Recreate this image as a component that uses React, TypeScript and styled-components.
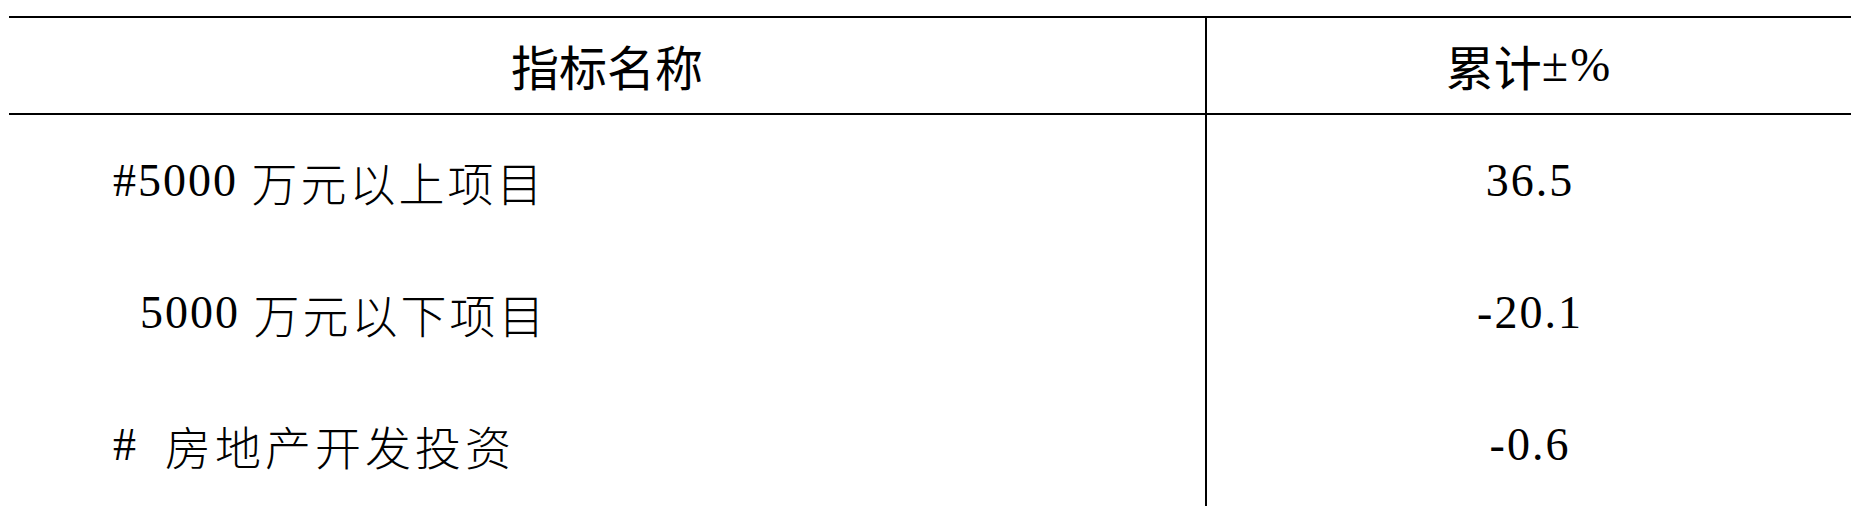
import React from "react";
import styled, { createGlobalStyle } from "styled-components";

type Row = {
  lead: string;
  name: string;
  value: string;
  spacing: number;
};

const rows: Row[] = [
  { lead: "#5000 ", name: "万元以上项目", value: "36.5", spacing: 3 },
  { lead: "  5000 ", name: "万元以下项目", value: "-20.1", spacing: 3 },
  { lead: "#  ", name: "房地产开发投资", value: "-0.6", spacing: 4 },
];

const GlobalStyle = createGlobalStyle`
  html, body {
    margin: 0;
    padding: 0;
    background: #fff;
    overflow: hidden;
    color: #000;
  }
`;

const Table = styled.div`
  margin: 16px 0 0 9px;
  border-top: 2px solid #000;
  display: grid;
  grid-template-columns: 1198px 1fr;
  font-size: 46px;
`;

const HeadCell = styled.div<{ $divider?: boolean }>`
  box-sizing: border-box;
  height: 97px;
  border-bottom: 2px solid #000;
  border-right: ${(p) => (p.$divider ? "2px solid #000" : "none")};
  display: flex;
  align-items: center;
  justify-content: center;
  line-height: 1;
  padding-bottom: 2px;
  font-size: 48px;
`;

const NameCell = styled.div`
  box-sizing: border-box;
  height: 132px;
  border-right: 2px solid #000;
  display: flex;
  align-items: center;
  padding-left: 104px;
  white-space: pre;
  line-height: 1;
`;

const ValueCell = styled.div`
  height: 132px;
  display: flex;
  align-items: center;
  justify-content: center;
  line-height: 1;
  padding-left: 2px;
`;

const Latin = styled.span`
  font-family: "Liberation Serif", "Times New Roman", serif;
  letter-spacing: 2px;
`;

const HeadCjk = styled.span`
  font-family: "Noto Sans CJK SC", sans-serif;
`;

const Cjk = styled.span<{ $spacing: number }>`
  font-family: "Noto Sans CJK SC", sans-serif;
  font-weight: 300;
  letter-spacing: ${(p) => p.$spacing}px;
`;

function App() {
  return (
    <>
      <GlobalStyle />
      <Table>
        <HeadCell $divider>
          <HeadCjk>指标名称</HeadCjk>
        </HeadCell>
        <HeadCell>
          <HeadCjk>累计</HeadCjk>
          <Latin>±%</Latin>
        </HeadCell>
        {rows.map((row) => (
          <React.Fragment key={row.name}>
            <NameCell>
              <Latin>{row.lead}</Latin>
              <Cjk $spacing={row.spacing}>{row.name}</Cjk>
            </NameCell>
            <ValueCell>
              <Latin>{row.value}</Latin>
            </ValueCell>
          </React.Fragment>
        ))}
      </Table>
    </>
  );
}

export default App;
